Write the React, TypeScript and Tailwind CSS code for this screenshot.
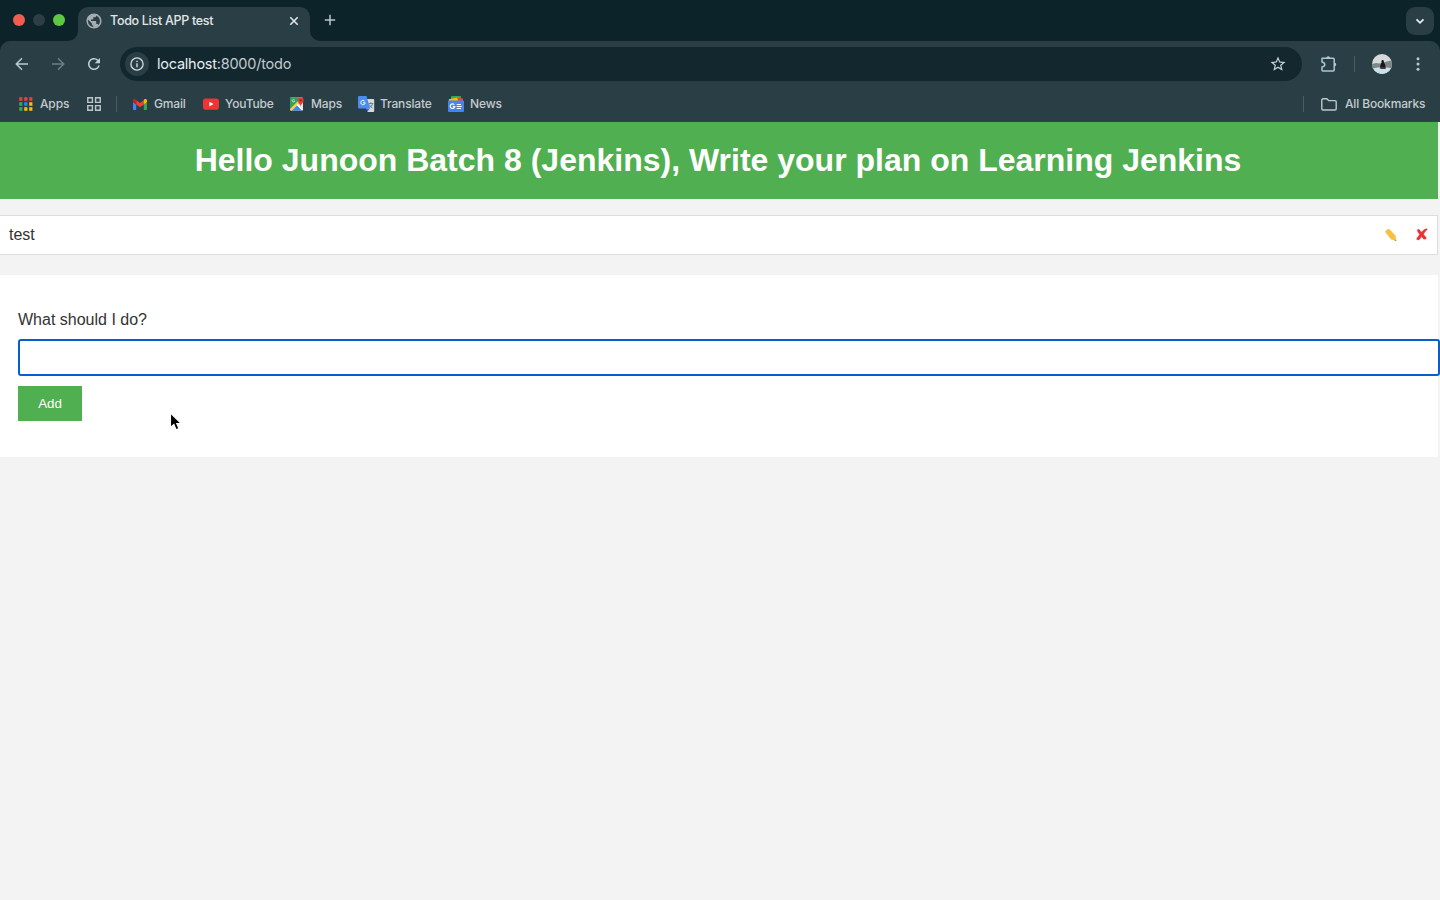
import React from "react";
import { MdPublic, MdRefresh, MdStarBorder } from "react-icons/md";

const APP_DOTS = ["#ea4335", "#ea4335", "#ea4335", "#34a853", "#1a8cff", "#fbbc04", "#34a853", "#fbbc04", "#fbbc04"];

function AppsIcon() {
  return (
    <svg width="14" height="14" viewBox="0 0 14 14" className="block shrink-0">
      {APP_DOTS.map((c, i) => (
        <rect key={i} x={0.2 + (i % 3) * 5} y={0.2 + Math.floor(i / 3) * 5} width="3.2" height="3.6" fill={c} />
      ))}
    </svg>
  );
}

function GmailIcon() {
  return (
    <svg width="14" height="11" viewBox="0 0 14 11" className="block shrink-0">
      <path d="M0 3l3.2 2.4V11H1a1 1 0 0 1-1-1z" fill="#4285f4" />
      <path d="M14 3l-3.2 2.4V11H13a1 1 0 0 0 1-1z" fill="#34a853" />
      <path d="M3.2 1.2L7 4l3.800-2.800v4.200L7 8.200 3.200 5.400z" fill="#ea4335" />
      <path d="M0 1.700C0 .2 1.600-.4 2.700.6l.5.5v4.300L0 3z" fill="#c5221f" />
      <path d="M14 1.700c0-1.500-1.600-2.100-2.700-1.100l-.5.5v4.300L14 3z" fill="#fbbc04" />
    </svg>
  );
}

function YouTubeIcon() {
  return (
    <svg width="16" height="12" viewBox="0 0 16 12" className="block shrink-0">
      <rect y="0.500" width="16" height="11.200" rx="2.800" fill="#f03434" />
      <path d="M6.400 3.700v4.800l4.100-2.400z" fill="#fff" />
    </svg>
  );
}

function MapsIcon() {
  return (
    <svg width="16" height="16" viewBox="0 0 16 16" className="block shrink-0">
      <rect x="1" y="1.500" width="13" height="13" rx="1" fill="#e5e5e0" />
      <path d="M2 1.500h8l1 5L1 14V2.500a1 1 0 0 1 1-1z" fill="#34a058" />
      <path d="M1 13l9-9 1.500 2L3 14.500H2a1 1 0 0 1-1-1z" fill="#f9d04a" />
      <path d="M3 14.500l5-5 5 5z" fill="#4285f4" />
      <path d="M7.500 9l1-1 5.500 5.500-.7 1z" fill="#fff" />
      <path d="M5.500 3.900a1.300 1.300 0 1 0 .2 1.200H4.700" fill="none" stroke="#fff" strokeWidth=".6" />
      <path d="M11.500 10.500c-.3-2.500-2.700-3.400-2.700-6.200a2.900 2.900 0 1 1 5.800 0c0 2.800-2.700 3.700-3.100 6.200z" fill="#e53b30" />
      <circle cx="11.700" cy="4.200" r="1" fill="#8c1d18" />
    </svg>
  );
}

function TranslateIcon() {
  return (
    <svg width="17" height="16" viewBox="0 0 17 16" className="block shrink-0">
      <path d="M6 3h9.200a1 1 0 0 1 1 1v11a1 1 0 0 1-1 1H9.500z" fill="#d5dadd" />
      <path d="M8 12.500h3.500L9.500 16z" fill="#3564c4" />
      <path d="M1 0h7.500l3.600 12.500H1a1 1 0 0 1-1-1V1a1 1 0 0 1 1-1z" fill="#4b8bf5" />
      <path d="M6.700 5.100a2.200 2.200 0 1 0 .5 1.700H5" fill="none" stroke="#fff" strokeWidth="1" />
      <path d="M10.500 7.500h4.800M12.800 6.300v1.200M14.500 7.600c-.4 2-1.700 3.400-3 4.200M11.300 8.500c.7 1.500 2 2.800 3.200 3.500" fill="none" stroke="#68777f" strokeWidth=".9" />
    </svg>
  );
}

function NewsIcon() {
  return (
    <svg width="16" height="16" viewBox="0 0 16 16" className="block shrink-0">
      <rect x="3" y="0" width="10" height="7" rx=".8" fill="#34a853" />
      <path d="M7 2l7.200.3a1 1 0 0 1 .8 1V8H7z" fill="#ea4335" />
      <path d="M.8 3.300L9 1.600 11 7H1z" fill="#fbbc04" />
      <rect x="0" y="4.600" width="16" height="11.400" rx="1" fill="#4285f4" />
      <path d="M6.300 8.700a2.300 2.300 0 1 0 .5 1.900H4.700" fill="none" stroke="#fff" strokeWidth="1.200" />
      <path d="M8.700 8.500h4.300M8.700 10.500h5M8.700 12.500h4.300" stroke="#fff" strokeWidth="1.200" />
    </svg>
  );
}

function Avatar() {
  return (
    <svg width="20" height="20" viewBox="0 0 20 20" className="block shrink-0">
      <defs>
        <clipPath id="face"><circle cx="10" cy="10" r="10" /></clipPath>
      </defs>
      <g clipPath="url(#face)">
        <path fill="#d7d8dc" d="M0 0h20v20H0z" />
        <path d="M0 10l4-1 4 .5 5-1.500 4-1 3-.5v9H0z" fill="#7c8887" />
        <path d="M0 14.500l6-1h9l5 .8V20H0z" fill="#c9e2ea" />
        <path d="M10.700 6a1.200 1.200 0 0 1 1 1.900l1.500 2.600.4 3-2.800 1.500-2.800-1.500.6-3L9.700 8a1.200 1.200 0 0 1 1-2z" fill="#17181b" />
        <path d="M8 13.500l3-.5 3 .5-.5 1.500H8.500z" fill="#5b3036" />
      </g>
    </svg>
  );
}

function TabStrip() {
  return (
    <div className="flex h-[41px] items-end bg-[#0c2329]">
      <div className="flex h-[41px] w-[68px] items-center gap-2 pb-px pl-[13px]">
        <i className="size-3 rounded-full bg-[#f25d51]" />
        <i className="size-3 rounded-full bg-[#2d3e45]" />
        <i className="size-3 rounded-full bg-[#5bc941]" />
      </div>
      <svg width="10" height="10" className="shrink-0"><path d="M10 0v10H0A10 10 0 0 0 10 0z" fill="#2a3f45" /></svg>
      <div className="flex h-[34px] w-[232px] items-center rounded-t-[10px] bg-[#2a3f45] pr-[11px] pb-[6px] pl-[7px]">
        <MdPublic size={18} color="#a5adb2" className="-mr-px shrink-0" />
        <span className="ml-2 w-[179px] shrink-0 text-[12.500px] font-medium tracking-[-0.300px] whitespace-nowrap text-[#e1e6e8]">Todo List APP test</span>
        <svg width="10" height="10" viewBox="0 0 10 10" className="block shrink-0"><path d="M1.300 1.300l7.400 7.400M8.700 1.300L1.300 8.700" stroke="#e1e6e8" strokeWidth="1.600" /></svg>
      </div>
      <svg width="10" height="10" className="shrink-0"><path d="M0 0v10h10A10 10 0 0 1 0 0z" fill="#2a3f45" /></svg>
      <svg width="12" height="12" viewBox="0 0 12 12" className="mb-[15px] ml-[4px] shrink-0"><path d="M6 .8v10.400M.8 6h10.400" stroke="#b4c8d0" strokeWidth="1.500" /></svg>
      <div className="mr-[6px] mb-[6px] ml-auto flex size-7 items-center justify-center rounded-[9px] bg-[#2a3f45]">
        <svg width="10" height="7" viewBox="0 0 10 7"><path d="M1.500 1.300L5 4.800l3.500-3.500" fill="none" stroke="#e3edf0" strokeWidth="1.800" /></svg>
      </div>
    </div>
  );
}

function Toolbar() {
  return (
    <div className="bg-[#0c2329]">
      <div className="flex h-[47px] items-center rounded-t-[10px] bg-[#2a3f45] pb-px">
        <svg width="14" height="14" viewBox="0 0 14 14" className="ml-[15px] shrink-0"><path d="M13 7H1.500M7 1.300L1.300 7 7 12.700" fill="none" stroke="#b6cbd2" strokeWidth="1.500" /></svg>
        <svg width="14" height="14" viewBox="0 0 14 14" className="ml-[22px] shrink-0"><path d="M1 7h11.500M7 1.300L12.700 7 7 12.700" fill="none" stroke="#6d7f86" strokeWidth="1.500" /></svg>
        <MdRefresh size={18} color="#bdd0d7" className="ml-5 shrink-0" />
        <div className="ml-[17px] flex h-[34px] w-[1182px] items-center rounded-full bg-[#12282e] pl-[5px]">
          <div className="flex size-6 items-center justify-center rounded-full bg-[#2a3f45]">
            <svg width="14" height="14" viewBox="0 0 14 14"><circle cx="7" cy="7" r="6.100" fill="none" stroke="#d5dde0" strokeWidth="1.300" /><path d="M7 6.300V10.200M7 3.700v1.400" stroke="#d5dde0" strokeWidth="1.400" /></svg>
          </div>
          <span className="ml-2 text-[14.500px] tracking-[-0.240px] whitespace-nowrap text-[#c3cbce]"><span className="text-[#e8eef0]">localhost</span>:8000/todo</span>
          <MdStarBorder size={18} color="#c8d2d6" className="mr-[15px] ml-auto" />
        </div>
        <svg width="18" height="18" viewBox="0 0 18 18" className="ml-[18px] shrink-0">
          <path d="M2 3.200h11.200a1 1 0 0 1 1 1V15a1 1 0 0 1-1 1H3a1 1 0 0 1-1-1v-2.900c3.700-.8 3.700-4.400 0-5.100z" fill="none" stroke="#a9c8d2" strokeWidth="1.500" strokeLinejoin="round" />
          <path d="M6.200 3.200a2 2 0 0 1 4 0zM14.200 7.600a2 2 0 0 1 0 4z" fill="#a9c8d2" />
        </svg>
        <i className="ml-[16px] h-4 w-px bg-[#465e65]" />
        <div className="ml-[17px]"><Avatar /></div>
        <svg width="4" height="14" viewBox="0 0 4 14" className="ml-6 shrink-0" fill="#b6cbd2"><circle cx="2" cy="1.800" r="1.500" /><circle cx="2" cy="7" r="1.500" /><circle cx="2" cy="12.200" r="1.500" /></svg>
      </div>
    </div>
  );
}

const label = "whitespace-nowrap text-[12px] font-medium tracking-[-0.150px] text-[#c4cbcf]";

function BookmarksBar() {
  return (
    <div className="flex h-[34px] items-center border-b border-[#354047] bg-[#2a3f45] pb-px pl-[19px]">
      <div className="flex w-[68px] items-center gap-[7px]"><AppsIcon /><span className={label}>Apps</span></div>
      <svg width="14" height="14" viewBox="0 0 14 14" className="shrink-0" fill="none" stroke="#bec8cb" strokeWidth="1.400">
        <path d="M.8.8h4.600v4.600H.8zM8.600.8h4.600v4.600H8.600zM.8 8.600h4.600v4.600H.8zM8.600 8.600h4.600v4.600H8.600z" />
      </svg>
      <i className="ml-[15px] h-4 w-px bg-[#465e65]" />
      <div className="ml-4 flex w-[70px] items-center gap-[7px]"><GmailIcon /><span className={label}>Gmail</span></div>
      <div className="flex w-[86px] items-center gap-[6px]"><YouTubeIcon /><span className={label}>YouTube</span></div>
      <div className="flex w-[69px] items-center gap-[6px]"><MapsIcon /><span className={label}>Maps</span></div>
      <div className="flex w-[90px] items-center gap-[5px]"><TranslateIcon /><span className={label}>Translate</span></div>
      <div className="flex items-center gap-[6px]"><NewsIcon /><span className={label}>News</span></div>
      <i className="ml-auto h-4 w-px bg-[#465e65]" />
      <div className="ml-[17px] flex w-[119px] items-center gap-2">
        <svg width="16" height="13" viewBox="0 0 16 13" className="shrink-0"><path d="M.8 10.800V2A1.200 1.200 0 0 1 2 .8h3.800l1.800 1.800H14a1.200 1.200 0 0 1 1.200 1.200v7A1.200 1.200 0 0 1 14 12H2a1.200 1.200 0 0 1-1.200-1.200z" fill="none" stroke="#bec8cb" strokeWidth="1.400" /></svg>
        <span className={label}>All Bookmarks</span>
      </div>
    </div>
  );
}

function TodoPage() {
  return (
    <main className="h-[778px] w-full bg-[#f3f3f3] font-['Liberation_Sans',Arial,sans-serif] text-[#333]">
      <header className="mr-[2px] flex h-[77px] items-center justify-center bg-[#50af50] pr-[2px]">
        <h1 className="text-[32px] leading-[37px] font-bold whitespace-nowrap text-white">Hello Junoon Batch 8 (Jenkins), Write your plan on Learning Jenkins</h1>
      </header>
      <div className="mt-4 mr-[2px] flex h-10 items-center border border-l-0 border-[#ddd] bg-white pr-[9px] pl-[9px] text-[16px]">
        <span>test</span>
        <svg width="14" height="14" viewBox="0 0 14 14" className="mr-[18px] mb-px ml-auto">
          <path d="M1 3.800Q2.500 1.200 5 .8L11.500 7.500 12.500 13 7 11.500z" fill="#f7c648" />
          <path d="M3 2.500l7.500 8M2.200 3.600l6.500 7.200M4.500 1.700l6.500 7" stroke="#e0a42d" strokeWidth=".6" strokeDasharray="1 1" />
          <path d="M11.200 11.700l1.300 1.400-1.900-.7z" fill="#80602c" />
        </svg>
        <svg width="12" height="13" viewBox="0 0 12 13" className="mb-[2px]">
          <path d="M1.300 1.800C3 .4 4.200 2.600 5.500 4.200 7 2.300 8.800.6 11 .8l.3.900C9.700 2.700 8.600 4.400 7.500 6.200l3.100 3.700c-.7 1.700-2.700 1.700-3.600.5L5.500 8.600c-1 1.900-2 3.500-3.700 3.400-1.200-.1-1.500-1.300-.8-2L3.600 6.500C2.700 5 1 3.400 1.300 1.800z" fill="#ed3131" stroke="#ed3131" strokeWidth=".3" />
        </svg>
      </div>
      <form className="mt-5 h-[182px] w-[1438px] bg-white pt-9 pl-[18px]">
        <label className="block h-[18px] text-[16px] leading-[18px]">What should I do?</label>
        <div className="mt-[10px] h-[37px] w-[1422px] rounded-[3px] border-2 border-[#075fce] bg-white" />
        <button type="button" className="mt-[10px] block h-[35px] w-16 bg-[#50af50] text-[13.333px] text-white">Add</button>
      </form>
    </main>
  );
}

export default function App() {
  return (
    <div className="relative h-[900px] w-[1440px] overflow-hidden font-['Inter','Liberation_Sans',sans-serif]">
      <TabStrip />
      <Toolbar />
      <BookmarksBar />
      <TodoPage />
      <svg width="16" height="22" viewBox="0 0 16 22" className="absolute top-[411px] left-[168px]">
        <path d="M2.500 2v14.500l3.400-3 2.200 5.200 2.800-1.200-2.200-4.900h4.500z" fill="#000" stroke="#fff" strokeWidth="1.100" />
      </svg>
    </div>
  );
}
